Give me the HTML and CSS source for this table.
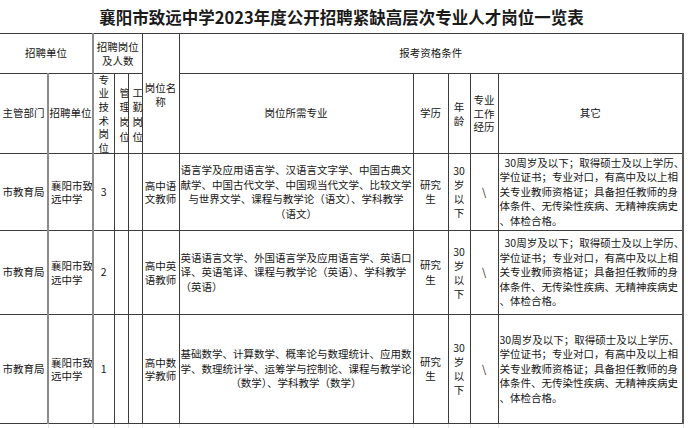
FILE: index.html
```html
<!DOCTYPE html>
<html lang="zh-CN">
<head>
<meta charset="utf-8">
<title>襄阳市致远中学2023年度公开招聘紧缺高层次专业人才岗位一览表</title>
<link rel="stylesheet" href="styles.css">
</head>
<body>
<div class="title">襄阳市致远中学2023年度公开招聘紧缺高层次专业人才岗位一览表</div>
<table class="sheet">
  <colgroup>
    <col class="w1"><col class="w2"><col class="w3"><col class="w4"><col class="w5"><col class="w6">
    <col class="w7"><col class="w8"><col class="w9"><col class="w10"><col class="w11">
  </colgroup>
  <tr class="r1">
    <td colspan="2" class="first gl2">招聘单位</td>
    <td colspan="3" class="tight">招聘岗位<br>及人数</td>
    <td rowspan="2" class="tight"><div class="name-head">岗位名<br>称</div></td>
    <td colspan="5" class="last">报考资格条件</td>
  </tr>
  <tr class="r2">
    <td class="first gl">主管部门</td>
    <td class="gl">招聘单位</td>
    <td><div class="vbox v1">专<br>业<br>技<br>术<br>岗<br>位</div></td>
    <td><div class="vbox v2">管<br>理<br>岗<br>位</div></td>
    <td><div class="vbox v3">工<br>勤<br>岗<br>位</div></td>
    <td>岗位所需专业</td>
    <td>学历</td>
    <td class="tight">年<br>龄</td>
    <td class="tight">专业<br>工作<br>经历</td>
    <td class="last">其它</td>
  </tr>
  <tr class="d1">
    <td class="first gl">市教育局</td>
    <td class="gl unit">襄阳市致<br>远中学</td>
    <td>3</td>
    <td></td>
    <td></td>
    <td class="tight">高中语<br>文教师</td>
    <td class="major">语言学及应用语言学、汉语言文字学、中国古典文<br>献学、中国古代文学、中国现当代文学、比较文学<br>与世界文学、课程与教学论（语文）、学科教学<br>（语文）</td>
    <td>研究<br>生</td>
    <td class="age">30<br>岁<br>以<br>下</td>
    <td>\</td>
    <td class="last other"><span class="indent"></span>30周岁及以下；取得硕士及以上学历、<br>学位证书；专业对口，有高中及以上相<br>关专业教师资格证；具备担任教师的身<br>体条件、无传染性疾病、无精神疾病史<br>、体检合格。</td>
  </tr>
  <tr class="d2">
    <td class="first gl">市教育局</td>
    <td class="gl unit">襄阳市致<br>远中学</td>
    <td>2</td>
    <td></td>
    <td></td>
    <td class="tight">高中英<br>语教师</td>
    <td class="major left">英语语言文学、外国语言学及应用语言学、英语口<br>译、英语笔译、课程与教学论（英语）、学科教学<br>（英语）</td>
    <td>研究<br>生</td>
    <td class="age">30<br>岁<br>以<br>下</td>
    <td>\</td>
    <td class="last other"><span class="indent"></span>30周岁及以下；取得硕士及以上学历、<br>学位证书；专业对口，有高中及以上相<br>关专业教师资格证；具备担任教师的身<br>体条件、无传染性疾病、无精神疾病史<br>、体检合格。</td>
  </tr>
  <tr class="d3">
    <td class="first gl">市教育局</td>
    <td class="gl unit">襄阳市致<br>远中学</td>
    <td>1</td>
    <td></td>
    <td></td>
    <td class="tight">高中数<br>学教师</td>
    <td class="major">基础数学、计算数学、概率论与数理统计、应用数<br>学、数理统计学、运筹学与控制论、课程与教学论<br>（数学）、学科教学（数学）</td>
    <td>研究<br>生</td>
    <td class="age">30<br>岁<br>以<br>下</td>
    <td>\</td>
    <td class="last other">30周岁及以下；取得硕士及以上学历、<br>学位证书；专业对口，有高中及以上相<br>关专业教师资格证；具备担任教师的身<br>体条件、无传染性疾病、无精神疾病史<br>、体检合格。</td>
  </tr>
  <tr class="ghost">
    <td class="first"></td><td></td><td></td><td></td><td></td><td></td><td></td><td></td><td></td><td></td><td class="last"></td>
  </tr>
</table>
</body>
</html>
```
FILE: styles.css
```css
html, body {
  margin: 0;
  padding: 0;
  background: #ffffff;
}

body {
  width: 688px;
  height: 428px;
  overflow: hidden;
  font-family: "Noto Sans CJK SC", "Noto Sans", sans-serif;
  font-size: 10.5px;
  color: #161616;
}

.title {
  width: 683px;
  height: 33px;
  display: flex;
  align-items: center;
  justify-content: center;
  font-size: 16.5px;
  font-weight: bold;
  color: #1a1a1a;
  letter-spacing: 0;
}

.sheet {
  border-collapse: collapse;
  table-layout: fixed;
  width: 683px;
}

.w1 { width: 48px; }
.w2 { width: 45px; }
.w3 { width: 21px; }
.w4 { width: 14px; }
.w5 { width: 14px; }
.w6 { width: 37px; }
.w7 { width: 234px; }
.w8 { width: 35px; }
.w9 { width: 22px; }
.w10 { width: 28px; }
.w11 { width: 185px; }

.sheet td {
  border: 1px solid #3c3c3c;
  padding: 0;
  text-align: center;
  vertical-align: middle;
  line-height: 14.5px;
  white-space: nowrap;
  overflow: hidden;
}

.sheet td.first { border-left: none; }
.sheet td.last { border-right: 2px solid #5a5a5a; }
.sheet td.gl { border-right: 2px solid #8c8c8c; }
.sheet td.gl2 { border-right: 2px solid #8c8c8c; }

.sheet td.tight { line-height: 13.5px; }

.r1 { height: 40px; }
.r2 { height: 80px; }
.d1 { height: 77px; }
.d2 { height: 84px; }
.d3 { height: 109px; }

.name-head {
  padding-top: 2px;
}

.vbox {
  height: 79px;
  overflow: hidden;
  display: flex;
  flex-direction: column;
  justify-content: center;
  line-height: 13.6px;
}

.v1 { align-items: center; }
.v2 { align-items: flex-start; padding-left: 5px; line-height: 14.6px; padding-top: 3px; box-sizing: border-box; }
.v3 { align-items: flex-start; padding-left: 4px; line-height: 14.6px; padding-top: 3px; box-sizing: border-box; }

.sheet td.unit {
  text-align: left;
  padding-left: 2px;
  line-height: 13.5px;
}

.sheet td.major {
  line-height: 14.5px;
}

.sheet td.major.left {
  text-align: left;
  padding-left: 1px;
}

.sheet td.age {
  line-height: 14px;
}

.sheet td.other {
  text-align: left;
  padding-left: 1px;
}

.indent {
  display: inline-block;
  width: 5px;
}

.ghost { height: 6px; }
.sheet .ghost td {
  border-top: none;
  border-bottom: none;
  border-left: 1px solid #e6e6e6;
  border-right: 1px solid #e6e6e6;
}
.sheet .ghost td.first { border-left: none; }
```
